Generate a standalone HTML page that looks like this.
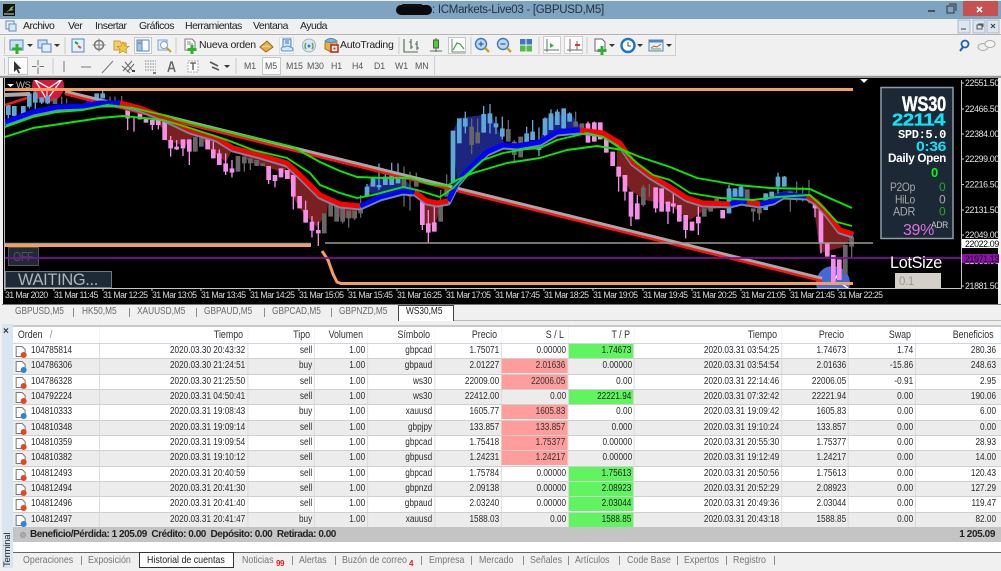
<!DOCTYPE html>
<html><head><meta charset="utf-8"><title>ICMarkets-Live03</title>
<style>
*{box-sizing:border-box}
html,body{margin:0;padding:0;background:#f0f0f0}
#w{position:relative;width:1001px;height:571px;overflow:hidden;background:#f0f0f0;font:10px/12px "Liberation Sans",sans-serif;color:#222;letter-spacing:-.33px;filter:blur(.3px)}
.a{position:absolute;white-space:nowrap}
.m{top:20px;font-size:10.5px;line-height:13px;color:#222;letter-spacing:-.52px}
.g{position:absolute;left:13px;top:325px;width:1205px;transform:scaleX(.82);transform-origin:0 0}
.r{display:grid;grid-template-columns:106.1px 180.5px 81.7px 64.6px 81.7px 81.7px 81.7px 80.5px 179.3px 81.7px 81.7px 103.7px;height:15.33px;line-height:14px;border-bottom:1px solid #cfcfcf;font-size:10px;letter-spacing:0;color:#2a2a2a}
.r:nth-child(even){background:#fff}
.r:nth-child(odd){background:#ececec}
.r span{display:block;text-align:right;padding-right:2.4px;border-right:1px solid #d6d6d6;position:relative}
.r span:first-child{text-align:left;padding-left:22px}
.r span:last-child{padding-right:6px;border-right:0}
.r .gr{background:#60f560;margin:0 1px 1px 0;color:#222}
.r .rd{background:#ff9c9c;margin:0 1px 1px 0;color:#333}
.r svg{position:absolute;left:2.4px;top:1px;transform:scaleX(1.22);transform-origin:0 0}
.h{height:19px;background:#fff;border-top:2px solid #c9c9c9;border-bottom:1px solid #cdd6e0;line-height:16px;font-size:10.8px;letter-spacing:0;color:#333;display:grid;grid-template-columns:106.1px 180.5px 81.7px 64.6px 81.7px 81.7px 81.7px 80.5px 179.3px 81.7px 81.7px 103.7px}
.h span{text-align:right;padding-right:5px;border-right:1px solid #edf2f8}
.t{top:306px;color:#6a6a6a;font-size:10px;letter-spacing:0;transform:scaleX(.83);transform-origin:0 0}
.b{top:554px;color:#757575;font-size:10.3px;line-height:13px;letter-spacing:0;transform:scaleX(.86);transform-origin:0 0}
.s{position:absolute;width:1px;background:#8c8c8c}
.tf{top:60px;font-size:8.8px;line-height:12px;color:#555;letter-spacing:-.1px}
</style></head><body><div id="w">

<!-- title bar -->
<div class="a" style="left:0;top:1px;width:1001px;height:18px;background:#7fa4c2"></div>
<div class="a" style="left:432px;top:3px;font-size:11.5px;line-height:15px;color:#22313f;letter-spacing:-.28px">: ICMarkets-Live03 - [GBPUSD,M5]</div>
<div class="a" style="left:963px;top:1px;width:35px;height:15px;background:#c75050"></div>

<!-- menu -->
<div class="a m" style="left:23px">Archivo</div>
<div class="a m" style="left:68px">Ver</div>
<div class="a m" style="left:95px">Insertar</div>
<div class="a m" style="left:139px">Gráficos</div>
<div class="a m" style="left:185px">Herramientas</div>
<div class="a m" style="left:253px">Ventana</div>
<div class="a m" style="left:300px">Ayuda</div>
<div class="a" style="left:0;top:34px;width:1001px;height:1px;background:#b5b5b5"></div>

<!-- toolbar borders -->
<div class="a" style="left:3px;top:35px;width:673px;height:21px;background:#f1f1f1;border-right:1px solid #cfcfcf;border-bottom:1px solid #cfcfcf"></div>
<div class="a" style="left:3px;top:56px;width:432px;height:20px;background:#f1f1f1;border-right:1px solid #cfcfcf"></div>
<div class="a" style="left:0;top:75px;width:1001px;height:1px;background:#dcdcdc"></div>

<div class="a" style="left:134px;top:37px;width:18px;height:17px;background:#fbfbfb;border:1px solid #c6c6c6"></div>
<div class="a" style="left:279px;top:37px;width:15px;height:17px;background:#fbfbfb;border:1px solid #dcdcdc"></div>
<div class="a" style="left:448px;top:37px;width:18px;height:17px;background:#fbfbfb;border:1px solid #c6c6c6"></div>
<div class="a" style="left:543px;top:36px;width:18px;height:18px;background:#fbfbfb;border:1px solid #cfcfcf"></div>
<div class="a" style="left:564px;top:36px;width:19px;height:18px;background:#fbfbfb;border:1px solid #cfcfcf"></div>
<div class="a" style="left:8px;top:57px;width:20px;height:18px;background:#fbfbfb;border:1px solid #c6c6c6"></div>
<div class="a" style="left:262px;top:57px;width:19px;height:18px;background:#fbfbfb;border:1px solid #c6c6c6"></div>

<div class="a" style="left:199px;top:38px;font-size:10.5px;line-height:14px;color:#222;letter-spacing:-.3px">Nueva orden</div>
<div class="a" style="left:340px;top:38px;font-size:10.5px;line-height:14px;color:#222;letter-spacing:-.3px">AutoTrading</div>
<div class="a tf" style="left:244px">M1</div>
<div class="a tf" style="left:265px">M5</div>
<div class="a tf" style="left:286px">M15</div>
<div class="a tf" style="left:307px">M30</div>
<div class="a tf" style="left:331px">H1</div>
<div class="a tf" style="left:352px">H4</div>
<div class="a tf" style="left:374px">D1</div>
<div class="a tf" style="left:395px">W1</div>
<div class="a tf" style="left:415px">MN</div>

<!-- icon overlay -->
<svg class="a" style="left:0;top:0" width="1001" height="78" viewBox="0 0 1001 78">
<rect x="3" y="4" width="12" height="12" fill="#111"/><path d="M5 13l4-3 2-3 3-1-2 3 2 1-5 1z" fill="#7fb54a"/><path d="M4 14h10" stroke="#ddd"/>
<rect x="396" y="5" width="36" height="10" rx="5" fill="#0a0a0a"/><rect x="402" y="4" width="20" height="3" rx="1" fill="#111"/>
<path d="M928 11h7" stroke="#333" stroke-width="1.5"/><path d="M947 6h7v7h-7zM949 4h7v7" fill="none" stroke="#333"/>
<path d="M977 7l5 5M982 7l-5 5" stroke="#fff" stroke-width="1.6"/>
<g fill="none" stroke="#5a8ec4"><rect x="6" y="21" width="8" height="8"/><rect x="9" y="24" width="7" height="7" fill="#dce9f6"/></g>
<g fill="#dce6f0" stroke="#a8b8c8"><rect x="958" y="20" width="12" height="13"/><rect x="973" y="20" width="12" height="13"/><rect x="987" y="20" width="12" height="13"/></g>
<path d="M961 29h5" stroke="#444"/><path d="M977 25h5v4h-5zM978 24h5v3" fill="none" stroke="#555"/><path d="M991 24l4 4M995 24l-4 4" stroke="#444" stroke-width="1.2"/>
<g stroke="#c9c9c9"><path d="M4.500 37v17M65 37v17M176 37v17M399 37v17M471 37v17M539 37v17M587 37v17M4.500 58v16M53 58v16M236 58v16"/></g>
<!-- row 1 -->
<rect x="10" y="40" width="13" height="10" fill="#cfe0f2" stroke="#4f86bf"/><path d="M17 44v10M12 49h10" stroke="#2fb12f" stroke-width="3"/>
<path d="M27 44h6l-3 3z" fill="#333"/>
<rect x="38" y="40" width="9" height="8" fill="#cfe0f2" stroke="#4f86bf"/><rect x="42" y="44" width="9" height="8" fill="#e4eef8" stroke="#4f86bf"/><path d="M54 44h6l-3 3z" fill="#333"/>
<rect x="72" y="39" width="12" height="13" fill="#e6f0fa" stroke="#4f86bf"/><path d="M75 42l3 2" stroke="#2c9a2c" stroke-width="2"/><path d="M78 46l3 2" stroke="#d8562a" stroke-width="2"/>
<circle cx="99" cy="45" r="4.500" fill="none" stroke="#777" stroke-width="1.5"/><path d="M99 38.500v13M92.500 45h13" stroke="#777"/>
<path d="M114 41h6l1 2h5v7h-12z" fill="#f1cf70" stroke="#c99b2c"/><path d="M123 42l1.800 4 4.200.4-3.200 2.800 1 4-3.800-2.200-3.800 2.200 1-4-3.200-2.800 4.200-.4z" fill="#f2cb3e" stroke="#b58a1c" stroke-width=".6"/>
<rect x="137" y="40" width="12" height="11" fill="#fff" stroke="#4f86bf"/><rect x="137" y="40" width="5" height="11" fill="#9fc4e8" stroke="#4f86bf"/><path d="M138 43h3" stroke="#d04040"/>
<rect x="158" y="40" width="9" height="10" fill="#e4eef8" stroke="#7ba2c8"/><circle cx="164" cy="45" r="3.500" fill="#fff" stroke="#7ba2c8"/><path d="M167 48l4 4" stroke="#c99b2c" stroke-width="2"/>
<path d="M185 39h7l3 3v8h-10z" fill="#fff" stroke="#777"/><path d="M187 42h4M187 44h6" stroke="#888"/><path d="M192 45v9M187.500 49.500h9" stroke="#2fb12f" stroke-width="3"/>
<path d="M260 47l7-6 6 6-7 5z" fill="#e3b14a" stroke="#9c6a1a"/><path d="M262 47l5-1 3 1" stroke="#f5dc9c" fill="none"/>
<rect x="283" y="39" width="8" height="8" fill="#d9e8f8" stroke="#3c78c0"/><path d="M285 41h4M285 43h4" stroke="#3c78c0"/><path d="M281 49q1-3 4-2 3-2 5 0 3 0 3 3l-1 1h-10z" fill="#d6e8f8" stroke="#5a94cc"/>
<circle cx="309" cy="45.500" r="6.500" fill="#dfe7ec" stroke="#9fb5c0"/><path d="M306 43a5 5 0 0 0 0 6M312 43a5 5 0 0 1 0 6" fill="none" stroke="#4da04d" stroke-width="1.400"/><circle cx="309" cy="46" r="1.500" fill="#2f80c0"/>
<path d="M325 43q6-6 12 0v6l-6 3-6-3z" fill="#e8b03e" stroke="#a07820"/><path d="M325 41q6-5 12 0l-6 2z" fill="#7db5e0" stroke="#4f86bf"/><rect x="331" y="45" width="7" height="7" fill="#fff" stroke="#d0241c" stroke-width="1.600"/><rect x="333.500" y="47.500" width="2" height="2" fill="#d0241c"/>
<path d="M404 39v13h14M411 39v10M417 41v9M409 42h2M411 47h2M415 44h2M417 48h2" fill="none" stroke="#4a6a50" stroke-width="1.100"/>
<path d="M430 51h12M436 38v14" stroke="#666"/><rect x="433.500" y="40" width="5" height="8" fill="#58c83c" stroke="#3a6a3a"/>
<path d="M452 39v13h13" fill="none" stroke="#6a8a78"/><path d="M453 50l4-7 3 1 4 5" fill="none" stroke="#3fa04a" stroke-width="1.200"/>
<circle cx="481" cy="44" r="5.500" fill="#bfd8f0" stroke="#3c78c0" stroke-width="1.400"/><path d="M478.500 44h5M481 41.500v5" stroke="#2a60a8" stroke-width="1.200"/><path d="M485 48l4 4" stroke="#d0a020" stroke-width="2.400"/>
<circle cx="503" cy="44" r="5.500" fill="#bfd8f0" stroke="#3c78c0" stroke-width="1.400"/><path d="M500.500 44h5" stroke="#2a60a8" stroke-width="1.200"/><path d="M507 48l4 4" stroke="#d0a020" stroke-width="2.400"/>
<rect x="520" y="39" width="5.500" height="5.500" fill="#3c78c0"/><rect x="526.500" y="39" width="5.500" height="5.500" fill="#3c78c0"/><rect x="520" y="45.500" width="5.500" height="6" fill="#58b84a"/><rect x="526.500" y="45.500" width="5.500" height="6" fill="#58b84a"/>
<path d="M547 39v13M544 50h15" stroke="#5a7a68"/><path d="M550 43v5l4-2.500z" fill="#38b038"/>
<path d="M570 39v13M567 50h15M577 41v9" stroke="#7a6a68"/><path d="M575 44h5v2h-5z" fill="#d04030"/>
<path d="M595 39h7l3 3v9h-10z" fill="#fff" stroke="#666"/><path d="M602 46v9M597.500 50.500h9" stroke="#2fb12f" stroke-width="3"/><path d="M609 44h6l-3 3z" fill="#333"/>
<circle cx="628" cy="45.500" r="6.500" fill="#fff" stroke="#1e74c8" stroke-width="2.400"/><path d="M628 42v4h3" fill="none" stroke="#555"/><path d="M637 44h6l-3 3z" fill="#333"/>
<rect x="649" y="40" width="14" height="11" fill="#e9f0f7" stroke="#4f86bf"/><rect x="649" y="40" width="14" height="2.500" fill="#4f86bf"/><path d="M651 48l3-2 3 1 4-3" fill="none" stroke="#d8562a"/><path d="M651 49h10" stroke="#55aa55"/><path d="M666 44h6l-3 3z" fill="#333"/>
<circle cx="965" cy="44" r="3.500" fill="none" stroke="#1e5fb8" stroke-width="1.800"/><path d="M963 47l-3 4" stroke="#1e5fb8" stroke-width="2"/>
<ellipse cx="983" cy="47" rx="5" ry="3.500" fill="#eee" stroke="#aaa"/><ellipse cx="990" cy="44" rx="5" ry="3.500" fill="#f5f5f5" stroke="#aaa"/>
<!-- row 2 -->
<path d="M14 61v11l2.500-2.500 2 4 1.500-.8-2-3.800h3.500z" fill="#333"/>
<path d="M38 60v14M32 66.500h12" stroke="#777"/><path d="M36.500 66.500h3" stroke="#f1f1f1" stroke-width="2"/>
<path d="M64 61v11M81 67h10M102 73l11-12" stroke="#777" stroke-width="1"/>
<path d="M123 71l9-10M127 72l7-8M125 62l7 8M122 66l8 7" stroke="#666"/><path d="M132 71h3" stroke="#444" stroke-width="2"/>
<path d="M145 61h11M145 64h11M145 67h11M145 70h11" stroke="#888" stroke-dasharray="1.500 1"/><path d="M153 73h3" stroke="#555" stroke-width="1.500"/>
<path d="M168 72l3-10h1l3 10M169.500 68.500h4" fill="none" stroke="#666" stroke-width="1.500"/>
<rect x="188" y="61" width="10" height="11" fill="#fff" stroke="#aaa" stroke-dasharray="2 1"/><path d="M190 63h6M193 63v7" stroke="#555" stroke-width="1.300"/>
<path d="M210 62l8 4M212 67l7 3" stroke="#555" stroke-width="1.600"/><path d="M224 65h6l-3 3z" fill="#333"/>
</svg>

<!-- chart -->
<svg class="a" style="left:0;top:76px" width="1001" height="230" viewBox="0 76 1001 230">
<defs><clipPath id="c"><rect x="5" y="80" width="956" height="208"/></clipPath></defs>
<rect x="0" y="76" width="1001" height="2" fill="#9a9a9a"/>
<rect x="3" y="78" width="995" height="226" fill="#000"/>
<rect x="4" y="78" width="1" height="211" fill="#bbb"/>
<g clip-path="url(#c)">
<!-- logos -->
<circle cx="48" cy="86" r="16" fill="#d8173c"/>
<path d="M35 80l12 20 15-21-13 9z" fill="none" stroke="#fff" stroke-width="1.300"/><path d="M47 100v-12" stroke="#eee"/>
<circle cx="833" cy="283" r="17" fill="#4169d8"/>
<path d="M840 271l-8 13 5-1 5 1 6 4" fill="none" stroke="#fff" stroke-width="1.500"/>
<!-- cloud -->
<g fill="#7a2020">
<polygon points="140,108 165,120 165,130 150,119"/>
<polygon points="163,117 165,140 185,146 197,132 190,130"/>
<polygon points="197,132 217,138 233,148 226,162 210,150"/>
<polygon points="236,150 287,165 285,173 250,162"/>
<polygon points="287,163 293,197 303,213 317,227 327,213 328,203 320,195 300,175"/>
<polygon points="333,204 360,206 352,218 340,218"/>
<polygon points="420,198 421,225 435,225 442,203 427,201"/>
<polygon points="617,148 617,170 630,190 645,200 670,205 690,220 705,210 730,207 703,203 687,198 670,187 650,175 633,162"/>
<polygon points="813,200 820,253 843,247 853,237 840,230 827,213"/>
</g>
<g fill="#1c2580">
<polygon points="453,131 459,118 490,114 496,125 505,145 487,152 470,168 457,183"/>
<polygon points="545,118 570,113 582,128 557,132 540,142"/>
<polygon points="365,190 373,178 400,175 415,190 380,197"/>
<polygon points="90,97 110,100 83,106"/>
<polygon points="766,195 790,190 807,196 773,201"/>
<polygon points="729,192 745,188 747,202 730,204"/>
</g>
<!-- candles left -->
<g transform="translate(0,80) scale(.3333)" fill="none">
<path stroke="#f48ee8" stroke-width="4" d="M383 90V150M402 110V155M420 98V118M438 112V128M457 120V150M475 120V148M494 120V180M512 168V230M530 180V210M549 178V228M568 178V255M623 175V208M640 185V235M658 208V255M677 220V285M696 240V292M806 258V312M825 285V322M843 265V292M862 270V297M880 285V388M899 348V385M917 362V428M936 408V472M955 425V498"/>
<path stroke="#f48ee8" stroke-width="14" d="M383 90V115M420 98V118M438 112V128M457 120V135M475 120V135M494 120V180M512 180V205M530 200V208M549 178V205M568 178V215M623 175V208M640 208V235M658 220V255M677 250V275M696 265V278M806 258V300M825 285V303M843 265V292M862 270V297M880 285V350M899 348V385M917 390V428M936 425V452M955 450V460"/>
<path stroke="#666" stroke-width="4" d="M586 170V215M604 170V200M714 228V275M733 230V275M751 235V270M770 240V258M788 250V258M165 55V72M185 50V72M200 55V70M330 50V70M345 50V70M365 48V70"/>
<path stroke="#666" stroke-width="14" d="M586 170V215M604 170V200M714 228V275M733 230V250M751 235V250M770 240V258M788 250V258M973 400V460M992 370V410M1010 375V425M165 55V72"/>
<path stroke="#5ea8d4" stroke-width="4" d="M25 75V125M43 78V115M70 78V110M88 40V85M106 30V90M125 52V72M143 48V72M290 40V60M308 33V55"/>
<path stroke="#5ea8d4" stroke-width="14" d="M25 75V105M43 78V108M70 78V105M88 40V80M106 38V68M125 52V68M143 48V70M290 40V60M308 40V55"/>
</g>
<!-- candles mid -->
<g transform="translate(340,80) scale(.3333)" fill="none">
<path stroke="#666" stroke-width="4" d="M8 385V430M26 392V443M44 392V420M62 345V413M192 260V380M210 275V392M229 278V320M302 330V425M320 283V350M395 115V222M413 115V190M505 120V185M523 180V248M542 170V232M707 95V140M726 130V145M910 315V380M928 312V350"/>
<path stroke="#666" stroke-width="14" d="M8 385V425M26 392V415M44 392V415M62 370V400M192 285V325M210 335V350M229 300V320M302 375V425M320 315V350M395 140V195M413 157V190M505 147V185M523 185V225M542 170V232M707 125V140M726 130V145M910 322V375"/>
<path stroke="#5ea8d4" stroke-width="4" d="M81 312V348M99 295V320M117 250V330M136 270V315M155 248V315M174 250V310M376 95V160M431 78V158M450 72V160M468 110V162M487 110V178M560 140V205M578 120V180M597 142V228M615 112V190M633 88V150M652 88V135M671 85V145M689 97V125"/>
<path stroke="#5ea8d4" stroke-width="14" d="M81 320V348M99 295V320M117 315V322M136 290V315M155 275V315M174 278V310M339 152V310M358 115V190M376 115V140M431 102V158M450 100V130M468 130V142M487 145V170M560 160V205M578 155V180M597 205V210M615 115V165M633 100V150M652 95V135M671 85V145M689 100V125"/>
<path stroke="#f48ee8" stroke-width="4" d="M247 355V450M265 390V488M283 380V455M744 125V188M763 125V185M781 127V178M799 175V218M818 215V258M836 260V335M855 285V362M873 335V438M892 345V418M947 322V398M965 325V395M984 365V432"/>
<path stroke="#f48ee8" stroke-width="14" d="M247 355V435M265 430V458M283 427V455M744 130V188M763 127V185M781 127V178M799 175V218M818 215V258M836 260V290M855 285V335M873 335V410M892 370V418M947 322V385M965 325V395M984 365V395"/>
</g>
<!-- candles right -->
<g transform="translate(670,80) scale(.3333)" fill="none">
<path stroke="#f48ee8" stroke-width="4" d="M10 320V400M28 375V425M47 405V475M66 425V452M85 380V465M158 390V415M435 365V412M453 390V520M472 490V530M490 525V608M508 538V600"/>
<path stroke="#f48ee8" stroke-width="14" d="M10 370V380M28 375V425M47 405V450M66 425V452M85 410V430M158 390V415M435 365V385M453 390V490M472 490V530M490 525V608M508 538V600"/>
<path stroke="#666" stroke-width="4" d="M103 385V410M122 375V395M140 355V380M232 328V380M250 385V425M268 385V420M361 335V395M380 305V365M398 320V365M417 300V370M526 495V585M545 470V535"/>
<path stroke="#666" stroke-width="14" d="M103 385V410M122 375V395M140 355V380M232 328V380M250 385V395M268 385V400M361 335V355M526 495V585M545 470V500"/>
<path stroke="#5ea8d4" stroke-width="4" d="M177 315V400M195 325V350M213 318V350M287 340V390M305 335V350M324 278V340M343 288V320"/>
<path stroke="#5ea8d4" stroke-width="14" d="M177 325V400M195 325V350M213 320V350M287 340V390M305 335V350M324 290V320M343 290V320"/>
</g>
<!-- trend lines -->
<path d="M65 92L822 279" stroke="#a8a8a8" stroke-width="4.500" fill="none"/>
<path d="M65 94L822 281" stroke="#ff1414" stroke-width="2.600" fill="none"/>
<path d="M5 95L30 94" stroke="#a8a8a8" stroke-width="4"/><path d="M5 105L27 98" stroke="#ff1414" stroke-width="2.500"/>
<!-- horizontals -->
<path d="M325 243H873M5 243.500H311" stroke="#9a9a9a" stroke-width="1.500"/>
<path d="M5 245.500H311" stroke="#f4a05a" stroke-width="3"/>
<path d="M5 89.500H853" stroke="#f4a05a" stroke-width="3"/>
<path d="M322 251L328 260 333 274 337 282 341 283.500H853" stroke="#f4a05a" stroke-width="3" fill="none"/>
<!-- band outline -->
<path transform="translate(0,1.500)" fill="none" stroke="#6e8aa5" stroke-width="6" stroke-linejoin="round" d="M5 122L33 112 57 107 83 106 100 103 120 103 140 108 163 117 190 130 217 138 233 148 260 155 287 163 300 175 320 195 340 204 360 206 380 197 403 191 415 192 427 201 437 203 448 201 457 183 470 168 487 152 503 145 517 146 540 142 557 132 580 130 603 133 620 143 633 162 650 175 670 187 687 198 703 203 730 204 742 201 747 202 760 204 773 201 783 195 807 196 817 202 827 213 840 230 853 234"/>
<g fill="none" stroke-width="5" stroke-linejoin="round">
<path stroke="#0000ff" d="M5 122L33 112 57 107 83 106 100 103 120 103M360 206L380 197 403 191 415 192M448 201L457 183 470 168 487 152 503 145 517 146 540 142 557 132 580 130M730 204L742 201 747 202M760 204L773 201 783 195 807 196"/>
<path stroke="#ff0000" d="M120 103L140 108 163 117 190 130 217 138 233 148 260 155 287 163 300 175 320 195 340 204 360 206M415 192L427 201 437 203 448 201M580 130L603 133 620 143 633 162 650 175 670 187 687 198 703 203 730 204M747 202L760 204M807 196L817 202 827 213 840 230 853 234"/>
</g>
<!-- green lines -->
<g fill="none" stroke="#00ee00" stroke-width="1.900" stroke-linejoin="round">
<path d="M5 127L33 117 57 112 83 110 107 105 133 108 163 115 190 123 233 133 293 147 320 162 340 171 357 177 383 178 410 178 430 184 447 186 457 180 473 173 507 163 540 158 567 150 597 146 623 150 640 157 670 167 697 178 737 185 770 188 810 189 827 197 852 208"/>
<path d="M5 137L33 128 67 123 100 118 123 116 163 120 190 128 227 140 253 150 287 158 310 173 320 185 340 193 357 198 373 195 403 187 417 190 440 197 453 188 463 178 483 160 503 153 527 149 540 148 557 140 587 133 603 137 623 150 637 163 653 175 670 180 690 193 720 198 753 200 777 197 810 195 823 207 837 222 852 226"/>
</g>
<!-- panels -->
<rect x="8.500" y="247.500" width="30" height="18" fill="#1e2a36" stroke="#555"/>
<text x="13" y="261" font-size="12.500" fill="#555" textLength="20" lengthAdjust="spacingAndGlyphs">OFF</text>
<rect x="5.500" y="271.500" width="106" height="16" fill="#1e2a36" stroke="#707a84"/>
<text x="18" y="285" font-size="16.500" fill="#aeb6bd" textLength="80" lengthAdjust="spacingAndGlyphs">WAITING...</text>
<path d="M5 258H961" stroke="#7f0e9f" stroke-width="1.800"/>
</g>
<path d="M7 84h7l-3.500 3z" fill="#fff"/>
<text x="16" y="88" font-size="9.500" fill="#bbb">WS</text>
<path d="M860 79h8l-4 4z" fill="#fff"/>

<!-- info panel -->
<rect x="881" y="87.500" width="72" height="151" fill="#1c2835" stroke="#8f9dab" stroke-width="1.500"/>
<g font-family="Liberation Sans" font-weight="bold">
<text x="902" y="111" font-size="21" fill="#fff" stroke="#fff" stroke-width=".4" textLength="44" lengthAdjust="spacingAndGlyphs">WS30</text>
<text x="892" y="125.500" font-size="17.500" fill="#0fe4f8" stroke="#0fe4f8" stroke-width=".3" textLength="53" lengthAdjust="spacingAndGlyphs">22114</text>
<text x="898" y="138" font-size="11.500" font-family="Liberation Mono" fill="#fff" textLength="48" lengthAdjust="spacingAndGlyphs">SPD:5.0</text>
<text x="916" y="151" font-size="14" fill="#0fe4f8" textLength="30" lengthAdjust="spacingAndGlyphs">0:36</text>
<text x="888" y="162" font-size="11.500" fill="#fff" textLength="58" lengthAdjust="spacingAndGlyphs">Daily Open</text>
<text x="931" y="177" font-size="13" fill="#00ff00">0</text>
</g>
<g font-size="12" fill="#a9a9a9">
<text x="890" y="191" textLength="25" lengthAdjust="spacingAndGlyphs">P2Op</text>
<text x="895" y="203.500" textLength="20" lengthAdjust="spacingAndGlyphs">HiLo</text>
<text x="893" y="215.500" textLength="22" lengthAdjust="spacingAndGlyphs">ADR</text>
<text x="939" y="191" fill="#1fae1f">0</text><text x="939" y="203.500">0</text><text x="939" y="215.500" fill="#1fae1f">0</text>
</g>
<text x="903" y="235" font-size="16" fill="#e070e0" textLength="31" lengthAdjust="spacingAndGlyphs">39%</text>
<text x="931" y="228" font-size="9.500" fill="#ccc" textLength="17" lengthAdjust="spacingAndGlyphs">ADR</text>
<text x="890" y="268" font-size="17" fill="#fff" textLength="52" lengthAdjust="spacingAndGlyphs">LotSize</text>
<rect x="895" y="273" width="46" height="15" fill="#d4d0c8"/>
<text x="899" y="285" font-size="11.500" fill="#999">0.1</text>

<!-- axes -->
<path d="M961.500 80V288.500M5 288.500H961.500" stroke="#c4c4c4" fill="none"/>
<path d="M961 83h3M961 109h3M961 134h3M961 159h3M961 184.500h3M961 210h3M961 235h3M961 261h3M961 286h3" stroke="#ccc"/>
<g font-size="8.800" fill="#e4e4e4" letter-spacing="-.35">
<text x="965" y="86">22551.50</text><text x="965" y="112">22466.50</text><text x="965" y="137">22384.00</text><text x="965" y="162">22299.00</text><text x="965" y="187.500">22216.50</text><text x="965" y="213">22131.50</text><text x="965" y="238">22049.00</text><text x="965" y="264">21966.00</text><text x="965" y="289">21881.50</text>
</g>
<rect x="962" y="239" width="37" height="9" fill="#fff"/><text x="965" y="247" font-size="8.800" fill="#000" letter-spacing="-.35">22022.09</text>
<rect x="962" y="254" width="37" height="9" fill="#8a12a8"/><text x="965" y="262" font-size="8.800" fill="#1a0a20" letter-spacing="-.35">21971.13</text>
<path d="M5 288v3M54 288v3M103 288v3M152 288v3M201 288v3M250 288v3M299 288v3M348 288v3M397 288v3M446 288v3M495 288v3M544 288v3M593 288v3M643 288v3M692 288v3M741 288v3M790 288v3M838 288v3" stroke="#ccc"/>
<g font-size="8.800" fill="#d8d8d8" letter-spacing="-.62">
<text x="5" y="298">31 Mar 2020</text><text x="54" y="298">31 Mar 11:45</text><text x="103" y="298">31 Mar 12:25</text><text x="152" y="298">31 Mar 13:05</text><text x="201" y="298">31 Mar 13:45</text><text x="250" y="298">31 Mar 14:25</text><text x="299" y="298">31 Mar 15:05</text><text x="348" y="298">31 Mar 15:45</text><text x="397" y="298">31 Mar 16:25</text><text x="446" y="298">31 Mar 17:05</text><text x="495" y="298">31 Mar 17:45</text><text x="544" y="298">31 Mar 18:25</text><text x="593" y="298">31 Mar 19:05</text><text x="643" y="298">31 Mar 19:45</text><text x="692" y="298">31 Mar 20:25</text><text x="741" y="298">31 Mar 21:05</text><text x="790" y="298">31 Mar 21:45</text><text x="838" y="298">31 Mar 22:25</text>
</g>
</svg>

<!-- chart tabs -->
<div class="a" style="left:2px;top:304px;width:999px;height:1px;background:#777"></div>
<div class="a" style="left:398px;top:305px;width:56px;height:16px;background:#fff;border:1px solid #444;border-bottom:0"></div>
<div class="a" style="left:454px;top:320px;width:547px;height:1px;background:#bbb"></div>
<div class="a t" style="left:15px">GBPUSD,M5</div><div class="s" style="left:73px;top:308px;height:9px"></div>
<div class="a t" style="left:82px">HK50,M5</div><div class="s" style="left:129px;top:308px;height:9px"></div>
<div class="a t" style="left:137px">XAUUSD,M5</div><div class="s" style="left:196px;top:308px;height:9px"></div>
<div class="a t" style="left:204px">GBPAUD,M5</div><div class="s" style="left:264px;top:308px;height:9px"></div>
<div class="a t" style="left:272px">GBPCAD,M5</div><div class="s" style="left:331px;top:308px;height:9px"></div>
<div class="a t" style="left:339px">GBPNZD,M5</div>
<div class="a t" style="left:406px;color:#222">WS30,M5</div>

<!-- left strip -->
<div class="a" style="left:2px;top:324px;width:11px;height:244px;background:#d9e5f1"></div>
<div class="a" style="left:3px;top:326px;font-size:10px;font-weight:bold;color:#333">×</div>
<div class="a" style="left:-9px;top:545px;width:34px;font-size:9.500px;line-height:10px;color:#222;transform:rotate(-90deg);text-align:center;letter-spacing:-.2px">Terminal</div>

<!-- table -->
<svg width="0" height="0" style="position:absolute"><defs>
<g id="sr"><path d="M1.500 1.500h6l3 3v7h-9z" fill="#fff" stroke="#777"/><circle cx="9" cy="10" r="3" fill="#e2481e"/></g>
<g id="sb"><path d="M1.500 1.500h6l3 3v7h-9z" fill="#fff" stroke="#777"/><circle cx="9" cy="10" r="3" fill="#2a84d8"/></g>
</defs></svg>
<div class="g">
<div class="h"><span style="text-align:left;padding-left:6px">Orden &nbsp; <span style="border:0;color:#888;display:inline">/</span></span><span>Tiempo</span><span>Tipo</span><span>Volumen</span><span>Símbolo</span><span>Precio</span><span>S / L</span><span>T / P</span><span>Tiempo</span><span>Precio</span><span>Swap</span><span style="padding-right:8px">Beneficios</span></div>
<div class="r"><span><svg width="13" height="14"><use href="#sr"/></svg>104785814</span><span>2020.03.30 20:43:32</span><span>sell</span><span>1.00</span><span>gbpcad</span><span>1.75071</span><span>0.00000</span><span class="gr">1.74673</span><span>2020.03.31 03:54:25</span><span>1.74673</span><span>1.74</span><span>280.36</span></div>
<div class="r"><span><svg width="13" height="14"><use href="#sb"/></svg>104786306</span><span>2020.03.30 21:24:51</span><span>buy</span><span>1.00</span><span>gbpaud</span><span>2.01227</span><span class="rd">2.01636</span><span>0.00000</span><span>2020.03.31 03:54:54</span><span>2.01636</span><span>-15.86</span><span>248.63</span></div>
<div class="r"><span><svg width="13" height="14"><use href="#sr"/></svg>104786328</span><span>2020.03.30 21:25:50</span><span>sell</span><span>1.00</span><span>ws30</span><span>22009.00</span><span class="rd">22006.05</span><span>0.00</span><span>2020.03.31 22:14:46</span><span>22006.05</span><span>-0.91</span><span>2.95</span></div>
<div class="r"><span><svg width="13" height="14"><use href="#sr"/></svg>104792224</span><span>2020.03.31 04:50:41</span><span>sell</span><span>1.00</span><span>ws30</span><span>22412.00</span><span>0.00</span><span class="gr">22221.94</span><span>2020.03.31 07:32:42</span><span>22221.94</span><span>0.00</span><span>190.06</span></div>
<div class="r"><span><svg width="13" height="14"><use href="#sb"/></svg>104810333</span><span>2020.03.31 19:08:43</span><span>buy</span><span>1.00</span><span>xauusd</span><span>1605.77</span><span class="rd">1605.83</span><span>0.00</span><span>2020.03.31 19:09:42</span><span>1605.83</span><span>0.00</span><span>6.00</span></div>
<div class="r"><span><svg width="13" height="14"><use href="#sr"/></svg>104810348</span><span>2020.03.31 19:09:14</span><span>sell</span><span>1.00</span><span>gbpjpy</span><span>133.857</span><span class="rd">133.857</span><span>0.000</span><span>2020.03.31 19:10:24</span><span>133.857</span><span>0.00</span><span>0.00</span></div>
<div class="r"><span><svg width="13" height="14"><use href="#sr"/></svg>104810359</span><span>2020.03.31 19:09:54</span><span>sell</span><span>1.00</span><span>gbpcad</span><span>1.75418</span><span class="rd">1.75377</span><span>0.00000</span><span>2020.03.31 20:55:30</span><span>1.75377</span><span>0.00</span><span>28.93</span></div>
<div class="r"><span><svg width="13" height="14"><use href="#sr"/></svg>104810382</span><span>2020.03.31 19:10:12</span><span>sell</span><span>1.00</span><span>gbpusd</span><span>1.24231</span><span class="rd">1.24217</span><span>0.00000</span><span>2020.03.31 19:12:49</span><span>1.24217</span><span>0.00</span><span>14.00</span></div>
<div class="r"><span><svg width="13" height="14"><use href="#sr"/></svg>104812493</span><span>2020.03.31 20:40:59</span><span>sell</span><span>1.00</span><span>gbpcad</span><span>1.75784</span><span>0.00000</span><span class="gr">1.75613</span><span>2020.03.31 20:50:56</span><span>1.75613</span><span>0.00</span><span>120.43</span></div>
<div class="r"><span><svg width="13" height="14"><use href="#sr"/></svg>104812494</span><span>2020.03.31 20:41:30</span><span>sell</span><span>1.00</span><span>gbpnzd</span><span>2.09138</span><span>0.00000</span><span class="gr">2.08923</span><span>2020.03.31 20:52:29</span><span>2.08923</span><span>0.00</span><span>127.29</span></div>
<div class="r"><span><svg width="13" height="14"><use href="#sr"/></svg>104812496</span><span>2020.03.31 20:41:40</span><span>sell</span><span>1.00</span><span>gbpaud</span><span>2.03240</span><span>0.00000</span><span class="gr">2.03044</span><span>2020.03.31 20:49:36</span><span>2.03044</span><span>0.00</span><span>119.47</span></div>
<div class="r"><span><svg width="13" height="14"><use href="#sb"/></svg>104812497</span><span>2020.03.31 20:41:47</span><span>buy</span><span>1.00</span><span>xauusd</span><span>1588.03</span><span>0.00</span><span class="gr">1588.85</span><span>2020.03.31 20:43:18</span><span>1588.85</span><span>0.00</span><span>82.00</span></div>
</div>

<!-- summary -->
<div class="a" style="left:13px;top:527px;width:988px;height:15px;background:#c4c4c4"></div>
<div class="a" style="left:30px;top:529px;font-weight:bold;font-size:10px;color:#222;letter-spacing:-.47px">Beneficio/Pérdida: 1 205.09&nbsp; Crédito: 0.00&nbsp; Depósito: 0.00&nbsp; Retirada: 0.00</div>
<div class="a" style="right:6px;top:529px;font-weight:bold;font-size:10px;color:#222;letter-spacing:-.4px">1 205.09</div>
<div class="a" style="left:20px;top:532px;width:6px;height:6px;border-radius:50%;background:#aaa;border:1px solid #999"></div>
<div class="a" style="left:13px;top:542px;width:988px;height:10px;background:#fff"></div>

<!-- bottom tabs -->
<div class="a" style="left:13px;top:552px;width:988px;height:1px;background:#666"></div>
<div class="a" style="left:139px;top:552px;width:95px;height:16px;background:#fff;border:1px solid #333;border-bottom:1px solid #333"></div>
<div class="a b" style="left:23px">Operaciones</div><div class="s" style="left:81px;top:556px;height:9px"></div>
<div class="a b" style="left:88px">Exposición</div>
<div class="a b" style="left:147px;color:#222">Historial de cuentas</div>
<div class="a b" style="left:242px">Noticias</div><div class="a" style="left:276px;top:559px;font-size:8px;line-height:10px;color:#e02020;font-weight:bold;letter-spacing:-.4px">99</div><div class="s" style="left:292px;top:556px;height:9px"></div>
<div class="a b" style="left:299px">Alertas</div><div class="s" style="left:335px;top:556px;height:9px"></div>
<div class="a b" style="left:342px">Buzón de correo</div><div class="a" style="left:409px;top:559px;font-size:8px;line-height:10px;color:#e02020;font-weight:bold">4</div><div class="s" style="left:421px;top:556px;height:9px"></div>
<div class="a b" style="left:429px">Empresa</div><div class="s" style="left:471px;top:556px;height:9px"></div>
<div class="a b" style="left:479px">Mercado</div><div class="s" style="left:523px;top:556px;height:9px"></div>
<div class="a b" style="left:530px">Señales</div><div class="s" style="left:568px;top:556px;height:9px"></div>
<div class="a b" style="left:575px">Artículos</div><div class="s" style="left:619px;top:556px;height:9px"></div>
<div class="a b" style="left:627px">Code Base</div><div class="s" style="left:677px;top:556px;height:9px"></div>
<div class="a b" style="left:684px">Expertos</div><div class="s" style="left:726px;top:556px;height:9px"></div>
<div class="a b" style="left:733px">Registro</div><div class="s" style="left:774px;top:556px;height:9px"></div>
</div></body></html>
